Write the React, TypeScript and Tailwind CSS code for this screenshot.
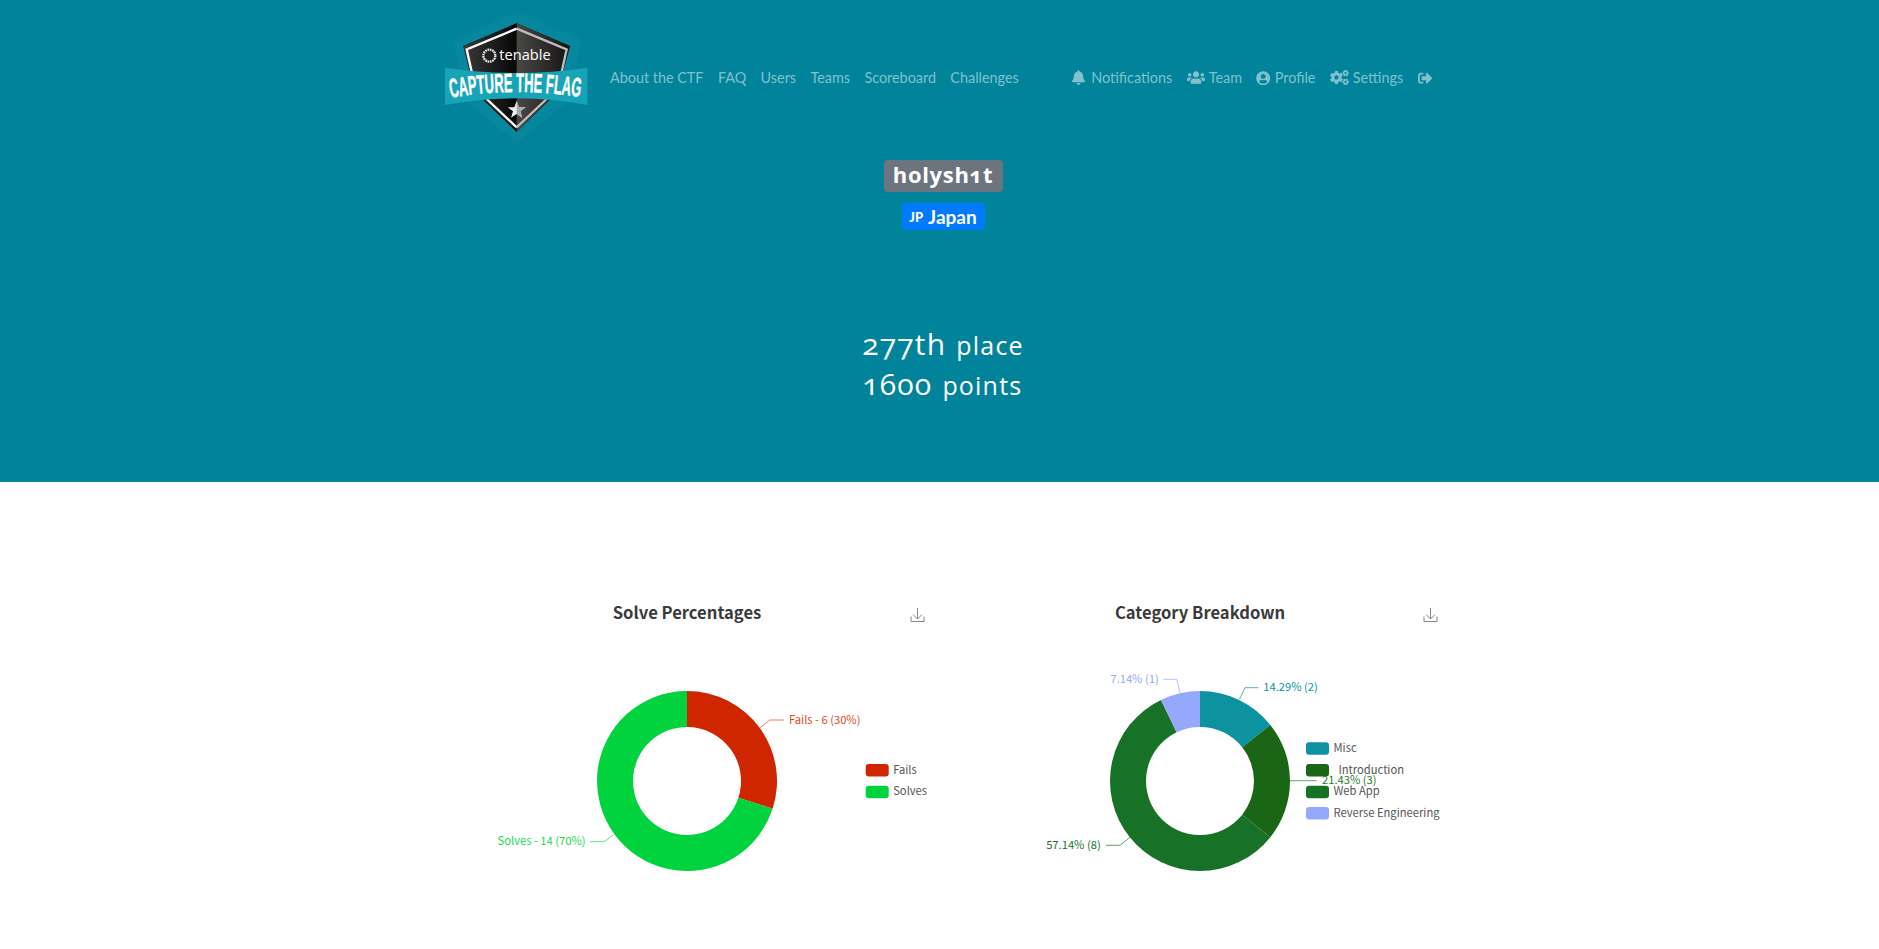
import React from "react";
import { FaBell, FaUsers, FaUserCircle, FaCogs, FaSignOutAlt } from "react-icons/fa";

const CHART_FONT = '"Noto Sans CJK SC", "Open Sans", sans-serif';

function arc(cx: number, cy: number, R: number, r: number, a0: number, a1: number) {
  const p = (rad: number, a: number) => {
    const t = ((a - 90) * Math.PI) / 180;
    return `${(cx + rad * Math.cos(t)).toFixed(2)} ${(cy + rad * Math.sin(t)).toFixed(2)}`;
  };
  const large = a1 - a0 > 180 ? 1 : 0;
  return `M${p(R, a0)} A${R} ${R} 0 ${large} 1 ${p(R, a1)} L${p(r, a1)} A${r} ${r} 0 ${large} 0 ${p(r, a0)} Z`;
}

type Slice = { pct: number; color: string };
type Label = { text: string; x: number; y: number; color: string; pts: string; anchor?: "start" | "end" };
type Legend = { text: string; color: string; y: number };

function Chart({
  title,
  cx,
  slices,
  labels,
  legend,
  legendX,
  vbX,
}: {
  title: string;
  cx: number;
  slices: Slice[];
  labels: Label[];
  legend: Legend[];
  legendX: number;
  vbX: number;
}) {
  let a = 0;
  const cy = 781;
  return (
    <svg width={513} height={360} viewBox={`${vbX} 580 513 360`} className="block">
      <text x={cx} y={618.5} textAnchor="middle" fontSize={16.6} fontWeight={700} fill="#3a3a3a" fontFamily={CHART_FONT}>
        {title}
      </text>
      <g fill="none" stroke="#777" strokeWidth={0.9} transform={`translate(${vbX === 431 ? 0 : 513} 0)`}>
        <path d="M911 616.5V621.5H924V616.5" />
        <path d="M917.5 608V619M913 614.5L917.5 619L922 614.5" />
      </g>
      {slices.map((s, i) => {
        const start = a;
        a += s.pct * 3.6;
        return <path key={i} d={arc(cx, cy, 90, 54, start, a)} fill={s.color} />;
      })}
      {labels.map((l, i) => (
        <g key={i}>
          <polyline points={l.pts} fill="none" stroke={l.color} strokeOpacity={0.7} strokeWidth={1} />
          <text x={l.x} y={l.y - 1} textAnchor={l.anchor ?? "start"} fontSize={11.2} fill={l.color} fontFamily={CHART_FONT} dominantBaseline="central">
            {l.text}
          </text>
        </g>
      ))}
      {legend.map((l, i) => (
        <g key={i}>
          <rect x={legendX} y={l.y} width={23} height={12.5} rx={3} fill={l.color} />
          <text x={legendX + 27.5} y={l.y + 4.5} fontSize={11.2} fill="#555" fontFamily={CHART_FONT} dominantBaseline="central" xmlSpace="preserve">
            {l.text}
          </text>
        </g>
      ))}
    </svg>
  );
}

function Logo() {
  return (
    <svg width={144} height={135} viewBox="45 30 432 405" className="block shrink-0 overflow-visible">
      <defs>
        <linearGradient id="lg-left" x1="0" x2="1" y1="0" y2="0">
          <stop offset="0" stopColor="#3a3a3a" />
          <stop offset="1" stopColor="#060606" />
        </linearGradient>
        <linearGradient id="lg-right" x1="0" x2="1" y1="0" y2="0">
          <stop offset="0" stopColor="#4a4845" />
          <stop offset="1" stopColor="#141414" />
        </linearGradient>
        <path id="banner-curve" d="M62 293 Q260 258 474 295" />
      </defs>
      <path d="M260 36L455 118L420 300L260 430L105 300L68 118Z" fill="#06879d" />
      <path d="M260 70L420 138L400 210L358 300L260 395L160 300L118 210L100 138Z" fill="#111" />
      <path d="M260 70L100 138L118 210L160 300L260 395Z" fill="url(#lg-left)" />
      <path d="M260 70L420 138L400 210L358 300L260 395Z" fill="url(#lg-right)" />
      <path d="M260 86L110 148L125 215" fill="none" stroke="#fff" strokeWidth={7} />
      <path d="M260 86L410 148L395 215" fill="none" stroke="#bdbdbd" strokeWidth={7} />
      <path d="M170 297L260 382" fill="none" stroke="#fff" strokeWidth={7} />
      <path d="M350 297L260 382" fill="none" stroke="#bdbdbd" strokeWidth={7} />
      <circle cx={178} cy={167} r={18} fill="none" stroke="#e8e8e8" strokeWidth={7} strokeDasharray="5 2" />
      <text x={208} y={181} fontSize={46} fontWeight={500} fill="#fff" fontFamily='"Open Sans", sans-serif' textLength={154} lengthAdjust="spacingAndGlyphs">
        tenable
      </text>
      <path d="M45 203Q260 235 472 203V315Q260 275 45 315Z" fill="#17a4b6" />
      <text fontSize={80} fontWeight={700} fill="#fff" stroke="#fff" strokeWidth={1.5} fontFamily='"Liberation Sans Narrow", "Liberation Sans", sans-serif' textLength={390} lengthAdjust="spacingAndGlyphs">
        <textPath href="#banner-curve">CAPTURE THE FLAG</textPath>
      </text>
      <path d="M260 303L267 322L287 322L271 334L277 353L260 342L243 353L249 334L233 322L253 322Z" fill="#eee" />
      <path d="M260 303L267 322L287 322L271 334L277 353L260 342Z" fill="#a8a8a8" />
    </svg>
  );
}

const leftLinks = ["About the CTF", "FAQ", "Users", "Teams", "Scoreboard", "Challenges"];
const rightLinks = [
  { icon: <FaBell className="h-[15px] w-[13px]" />, text: "Notifications", gap: "gap-[6px]" },
  { icon: <FaUsers className="h-[15px] w-[18px]" />, text: "Team", gap: "gap-[4px]" },
  { icon: <FaUserCircle className="h-[14.4px] w-[14.4px]" />, text: "Profile", gap: "gap-[4px]" },
  { icon: <FaCogs className="h-[15px] w-[19px]" />, text: "Settings", gap: "gap-[4px]" },
  { icon: <FaSignOutAlt className="h-[14.4px] w-[14.4px]" />, text: "", gap: "" },
];

export default function App() {
  return (
    <div className="min-h-[949px] bg-white font-['Lato',sans-serif]">
      <header className="h-[482px] bg-[#01839c] text-white">
        <nav className="flex h-[157px] items-start pl-[445px] pt-[10px] text-[14.4px] text-[#80c1cd]">
          <Logo />
          <ul className="ml-[13.8px] mt-[52px] flex h-8 items-center">
            {leftLinks.map((t) => (
              <li key={t} className="px-[7.2px]">
                {t}
              </li>
            ))}
          </ul>
          <ul className="ml-[39px] mt-[52px] flex h-8 items-center">
            {rightLinks.map((l, i) => (
              <li key={i} className={`flex items-center px-[7.2px] ${l.gap}`}>
                {l.icon}
                {l.text && <span>{l.text}</span>}
              </li>
            ))}
          </ul>
        </nav>
        <div className="ml-[7px] flex flex-col items-center">
          <h1 className="mt-[3px] flex h-8 w-[119px] items-center justify-center rounded bg-[#6c757d] pb-[3px] text-[22px] font-bold tracking-[0.7px] text-white font-['Open_Sans',sans-serif] oldstyle-nums">
            holysh1t
          </h1>
          <div className="mt-[11px] flex h-[27px] w-[83px] items-center justify-center gap-[5px] rounded bg-[#007bff] pt-[2px] text-[19px] font-bold">
            <span className="text-[13px] font-black">JP</span>
            <span>Japan</span>
          </div>
          <div className="mt-[94px] font-['Open_Sans',sans-serif] font-[380] tracking-[1.2px] oldstyle-nums">
            <div className="flex h-[40px] items-baseline gap-[10px] leading-[40px]">
              <span className="text-[30px]">277th</span>
              <span className="text-[25px]">place</span>
            </div>
            <div className="flex h-[40px] items-baseline gap-[10px] leading-[40px]">
              <span className="text-[30px]">1600</span>
              <span className="text-[25px]">points</span>
            </div>
          </div>
        </div>
      </header>
      <main className="ml-[431px] mt-[98px] flex w-[1026px]">
        <Chart
          title="Solve Percentages"
          cx={687}
          vbX={431}
          slices={[
            { pct: 30, color: "#cf2600" },
            { pct: 70, color: "#01d33f" },
          ]}
          labels={[
            { text: "Fails - 6 (30%)", x: 789, y: 719.5, color: "#e0492a", pts: "760,727.7 770,720 784,720" },
            { text: "Solves - 14 (70%)", x: 585.5, y: 841, color: "#1bd955", pts: "613.3,835 604,841.7 590,841.7", anchor: "end" },
          ]}
          legend={[
            { text: "Fails", color: "#cf2600", y: 764 },
            { text: "Solves", color: "#01d33f", y: 785.7 },
          ]}
          legendX={865.7}
        />
        <Chart
          title="Category Breakdown"
          cx={1200}
          vbX={944}
          slices={[
            { pct: 14.29, color: "#0d929f" },
            { pct: 21.43, color: "#1b6516" },
            { pct: 57.14, color: "#177228" },
            { pct: 7.14, color: "#96a8fb" },
          ]}
          labels={[
            { text: "14.29% (2)", x: 1263.3, y: 687.3, color: "#0d929f", pts: "1239.3,699.3 1245,687.7 1258.3,687.7" },
            { text: "21.43% (3)", x: 1322, y: 780, color: "#2f7a2a", pts: "1290,780.7 1316.7,780.7" },
            { text: "57.14% (8)", x: 1100.7, y: 845, color: "#177228", pts: "1130,837.3 1120,845.3 1106,845.3", anchor: "end" },
            { text: "7.14% (1)", x: 1158.7, y: 679, color: "#96a8fb", pts: "1180,692.7 1176.7,679.3 1163.3,679.3", anchor: "end" },
          ]}
          legend={[
            { text: "Misc", color: "#0d929f", y: 742.3 },
            { text: "  Introduction", color: "#1b6516", y: 764 },
            { text: "Web App", color: "#177228", y: 785.7 },
            { text: "Reverse Engineering", color: "#96a8fb", y: 807 },
          ]}
          legendX={1306}
        />
      </main>
    </div>
  );
}
